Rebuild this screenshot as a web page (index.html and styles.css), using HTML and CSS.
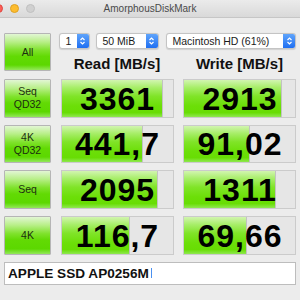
FILE: index.html
```html
<!DOCTYPE html>
<html lang="en">
<head>
    <meta charset="UTF-8">
    <title>AmorphousDiskMark</title>
    <link rel="stylesheet" href="styles.css">
</head>
<body>
    <div class="window">
        <div class="titlebar">
            <div class="lights">
                <span class="light red"></span>
                <span class="light yellow"></span>
                <span class="light gray"></span>
            </div>
            <div class="title">AmorphousDiskMark</div>
        </div>
        <div class="panel">
            <div class="top">
                <div class="btn all">All</div>
                <div class="selects">
                    <div class="select s-count"><span class="val">1</span><span class="arrow"><svg width="7" height="10" viewBox="0 0 7 10"><path d="M1.5 4 L3.5 2 L5.5 4 M1.5 6 L3.5 8 L5.5 6" fill="none" stroke="#fff" stroke-width="1.2"/></svg></span></div>
                    <div class="select s-size"><span class="val">50 MiB</span><span class="arrow"><svg width="7" height="10" viewBox="0 0 7 10"><path d="M1.5 4 L3.5 2 L5.5 4 M1.5 6 L3.5 8 L5.5 6" fill="none" stroke="#fff" stroke-width="1.2"/></svg></span></div>
                    <div class="select s-disk"><span class="val">Macintosh HD (61%)</span><span class="arrow"><svg width="7" height="10" viewBox="0 0 7 10"><path d="M1.5 4 L3.5 2 L5.5 4 M1.5 6 L3.5 8 L5.5 6" fill="none" stroke="#fff" stroke-width="1.2"/></svg></span></div>
                </div>
                <div class="head">Read [MB/s]</div>
                <div class="head">Write [MB/s]</div>
            </div>
            <div class="results">
                <div class="btn">Seq<br>QD32</div>
                <div class="cell"><div class="fill" style="width:91%"></div><div class="num">3361</div></div>
                <div class="cell"><div class="fill" style="width:88.5%"></div><div class="num">2913</div></div>

                <div class="btn">4K<br>QD32</div>
                <div class="cell"><div class="fill" style="width:73.5%"></div><div class="num">441,7</div></div>
                <div class="cell"><div class="fill" style="width:59.5%"></div><div class="num">91,02</div></div>

                <div class="btn">Seq</div>
                <div class="cell"><div class="fill" style="width:87%"></div><div class="num">2095</div></div>
                <div class="cell"><div class="fill" style="width:82.5%"></div><div class="num">1311</div></div>

                <div class="btn">4K</div>
                <div class="cell"><div class="fill" style="width:61.5%"></div><div class="num">116,7</div></div>
                <div class="cell"><div class="fill" style="width:57%"></div><div class="num">69,66</div></div>
            </div>
            <div class="drive">APPLE SSD AP0256M<span class="caret"></span></div>
        </div>
    </div>
</body>
</html>
```
FILE: styles.css
```css
html,body{
    margin:0; padding:0; height:100%;
}
body{
    background:#ececec; font-family:"Liberation Sans", Arial, sans-serif; overflow:hidden;
}
.window{
    width:300px; height:300px; background:#ececec;
}
.titlebar{
    height:17px; border-bottom:1px solid #c6c6c6; position:relative;
    background:linear-gradient(#ebebeb, #d9d9d9);
    display:flex; align-items:center; justify-content:center;
}
.lights{
    position:absolute; left:-6px; top:4px; display:flex; gap:7px;
}
.light{
    width:9px; height:9px; border-radius:50%; box-sizing:border-box;
}
.light.red{ background:#fc5f57; border:0.5px solid #e0443e; }
.light.yellow{ background:#fdbc2e; border:0.5px solid #dea123; }
.light.gray{ background:#d0d0d0; border:0.5px solid #c0c0c0; }
.title{
    font-size:10px; color:#4a4a4a; line-height:17px;
}
.panel{
    padding:15px 4px 0 4px;
}
.top{
    display:grid; grid-template-columns:47px 113px 113px; justify-content:space-between;
    grid-template-rows:23px 15px; margin-bottom:8px;
}
.btn{
    box-sizing:border-box; border:1px solid #b5b5b5; border-radius:1px;
    background:linear-gradient(#e2f6d4 0%, #b8ef88 22%, #7fe22c 45%, #62da04 62%, #5cd800 86%, #93e85a 100%);
    color:#1c2e10; font-size:10.5px; line-height:13px; text-align:center;
    display:flex; align-items:center; justify-content:center;
}
.btn.all{
    grid-row:1 / 3; grid-column:1;
}
.selects{
    grid-column:2 / 4; grid-row:1; display:flex; gap:6px; margin-left:-2px; height:16px;
}
.select{
    box-sizing:border-box; height:16px; background:#fff; border:1px solid #c4c4c4; border-radius:3px;
    display:flex; align-items:center; justify-content:space-between; overflow:hidden;
    box-shadow:0 0.5px 1px rgba(0,0,0,0.12);
}
.s-count{ width:31px; }
.s-size{ width:63px; }
.s-disk{ flex:1; margin-left:1px; }
.select .val{
    font-size:10.5px; color:#1a1a1a; padding-left:6px;
}
.select .arrow{
    width:12px; height:100%; background:linear-gradient(#5fa4fb, #1f6ff2);
    display:flex; align-items:center; justify-content:center;
}
.head{
    grid-row:2; font-size:15px; font-weight:bold; line-height:15px; text-align:center; color:#111;
}
.results{
    display:grid; grid-template-columns:47px 113px 113px; justify-content:space-between;
    grid-auto-rows:38.5px; row-gap:7.2px;
}
.cell{
    box-sizing:border-box; border:1px solid #cbcbcb; background:#e6e6e6;
    display:grid; overflow:hidden;
}
.fill{
    grid-area:1 / 1; height:100%; box-sizing:border-box; border-right:1px solid #c2c2c2;
    background:linear-gradient(#d2f5b0 0%, #a8ee6a 20%, #80e428 44%, #6cdf08 70%, #68dd04 88%, #8fe850 100%);
}
.num{
    grid-area:1 / 1; font-size:32px; font-weight:bold; letter-spacing:1px; line-height:1;
    color:#000; text-align:center; align-self:center; padding-top:1px; padding-left:1px;
}
.drive{
    box-sizing:border-box; margin-top:7px; height:23px; background:#fff; border:1px solid #bdbdbd;
    font-size:13.6px; font-weight:bold; color:#111; padding-left:3px;
    display:flex; align-items:center;
}
.caret{
    display:inline-block; width:1px; height:10px; background:#4a90f0; margin-left:2px;
}
```
